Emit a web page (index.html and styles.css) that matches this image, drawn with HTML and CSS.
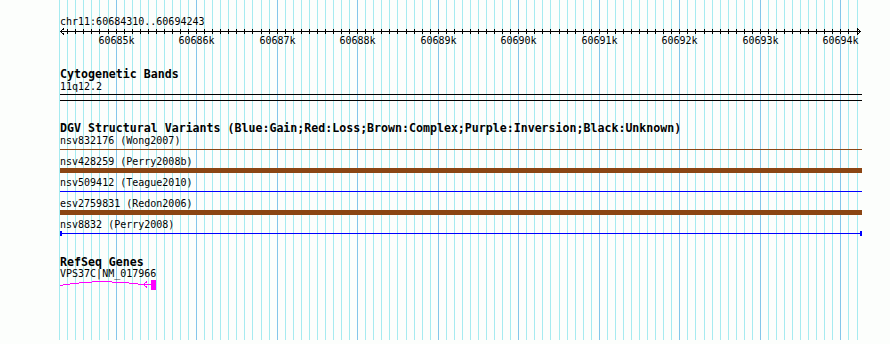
FILE: index.html
```html
<!DOCTYPE html>
<html lang="en">
<head>
  <meta charset="UTF-8" />
  <title>chr11:60684310..60694243</title>
  <link rel="stylesheet" href="styles.css">
</head>
<body>
  <div class="panel">
    <svg class="grid" id="grid" width="890" height="344"></svg>

    <div class="locus">chr11:60684310..60694243</div>
    <svg class="ruler" width="830" height="20">
      <line class="axis" x1="0" y1="3.5" x2="801" y2="3.5"/>
      <path class="axis" d="M4 0.5 L0.5 3.5 L4 6.5"/>
      <path class="axis" d="M797 0.5 L800.5 3.5 L797 6.5"/>
      <g id="ticks"></g>
      <text x="56.5" y="16">60685k</text>
      <text x="136.5" y="16">60686k</text>
      <text x="217.5" y="16">60687k</text>
      <text x="297.5" y="16">60688k</text>
      <text x="378.5" y="16">60689k</text>
      <text x="458.5" y="16">60690k</text>
      <text x="539.5" y="16">60691k</text>
      <text x="619.5" y="16">60692k</text>
      <text x="700.5" y="16">60693k</text>
      <text x="780.5" y="16">60694k</text>
    </svg>

    <section class="track cyto">
      <div class="track-title">Cytogenetic Bands</div>
      <div class="label">11q12.2</div>
      <div class="band"></div>
    </section>

    <section class="track dgv">
      <div class="track-title">DGV Structural Variants (Blue:Gain;Red:Loss;Brown:Complex;Purple:Inversion;Black:Unknown)</div>
      <div class="variant">
        <div class="label">nsv832176 (Wong2007)</div>
        <div class="feature thin brown"></div>
      </div>
      <div class="variant">
        <div class="label">nsv428259 (Perry2008b)</div>
        <div class="feature thick brown"></div>
      </div>
      <div class="variant">
        <div class="label">nsv509412 (Teague2010)</div>
        <div class="feature thin blue"></div>
      </div>
      <div class="variant">
        <div class="label">esv2759831 (Redon2006)</div>
        <div class="feature thick brown"></div>
      </div>
      <div class="variant">
        <div class="label">nsv8832 (Perry2008)</div>
        <div class="feature thin blue capped"></div>
      </div>
    </section>

    <section class="track refseq">
      <div class="track-title">RefSeq Genes</div>
      <div class="label">VPS37C|NM_017966</div>
      <svg class="gene" width="200" height="12">
        <path class="intron" d="M0 5.5 Q40 -1.5 83 4.5"/>
        <line class="intron" x1="83" y1="4.5" x2="91" y2="4.5"/>
        <path class="intron" d="M87 1.5 L83.5 4.5 L87 7.5"/>
        <rect class="exon" x="91" y="0" width="5" height="10"/>
      </svg>
    </section>
  </div>

  <script>
    const START = 60684310;
    const END = 60694243;
    const SCALE = 800 / (END - START);
    const NS = "http://www.w3.org/2000/svg";

    function bpToX(bp) {
      return Math.round((bp - START) * SCALE);
    }

    function addLine(parent, x, y1, y2, cls) {
      const l = document.createElementNS(NS, "line");
      l.setAttribute("x1", x);
      l.setAttribute("x2", x);
      l.setAttribute("y1", y1);
      l.setAttribute("y2", y2);
      if (cls) l.setAttribute("class", cls);
      parent.appendChild(l);
    }

    // grid lines every 100bp, darker every 1kb
    const grid = document.getElementById("grid");
    for (let bp = 60684300; bp <= 60694200; bp += 100) {
      addLine(grid, 60 + bpToX(bp) + 0.5, 0, 340, bp % 1000 === 0 ? "major" : "minor");
    }

    // ruler ticks
    const ticks = document.getElementById("ticks");
    for (let bp = 60684400; bp < END; bp += 100) {
      addLine(ticks, bpToX(bp) + 0.5, 1, 6, "axis");
    }
  </script>
</body>
</html>
```

FILE: styles.css
```css
body {
  margin: 0;
  background: #fcfefc;
  font-family: "DejaVu Sans Mono", monospace;
  font-size: 10px;
  color: #000;
}

.panel {
  position: relative;
  z-index: 0;
  width: 890px;
  height: 344px;
  padding: 15px 0 0 60px;
  box-sizing: border-box;
  overflow: hidden;
}

.grid {
  position: absolute;
  top: 0;
  left: 0;
  z-index: -1;
  shape-rendering: crispEdges;
}

.grid .minor {
  stroke: #a6ebf0;
}

.grid .major {
  stroke: #84c6ea;
}

.locus {
  line-height: 13px;
  height: 13px;
}

.ruler {
  display: block;
  overflow: visible;
  shape-rendering: crispEdges;
}

.ruler .axis {
  stroke: #000;
  fill: none;
}

.ruler text {
  font-family: "DejaVu Sans Mono", monospace;
  font-size: 10px;
  text-anchor: middle;
  fill: #000;
}

.track-title {
  font-weight: bold;
  font-size: 11.6px;
  line-height: 12px;
  white-space: nowrap;
}

.label {
  line-height: 13px;
  height: 13px;
  white-space: nowrap;
}

.cyto {
  margin-top: 20px;
}

.band {
  width: 802px;
  height: 5px;
  margin-top: 1px;
  border-top: 1px solid #000;
  border-bottom: 1px solid #000;
}

.dgv {
  margin-top: 21px;
}

.feature {
  width: 802px;
  height: 5px;
  margin-bottom: 3px;
  box-sizing: border-box;
}

.feature.thin.brown {
  background: linear-gradient(#8b4513, #8b4513) center / 100% 1px no-repeat;
}

.feature.thin.blue {
  background: linear-gradient(#0000ff, #0000ff) center / 100% 1px no-repeat;
}

.feature.thick.brown {
  background: #8b4513;
}

.feature.capped {
  border-left: 2px solid #0000ff;
  border-right: 2px solid #0000ff;
}

.refseq {
  margin-top: 20px;
}

.refseq .label {
  margin-top: -1px;
}

.gene {
  display: block;
  overflow: visible;
  shape-rendering: crispEdges;
}

.gene .intron {
  stroke: #ff00ff;
  fill: none;
}

.gene .exon {
  fill: #ff00ff;
}
```
